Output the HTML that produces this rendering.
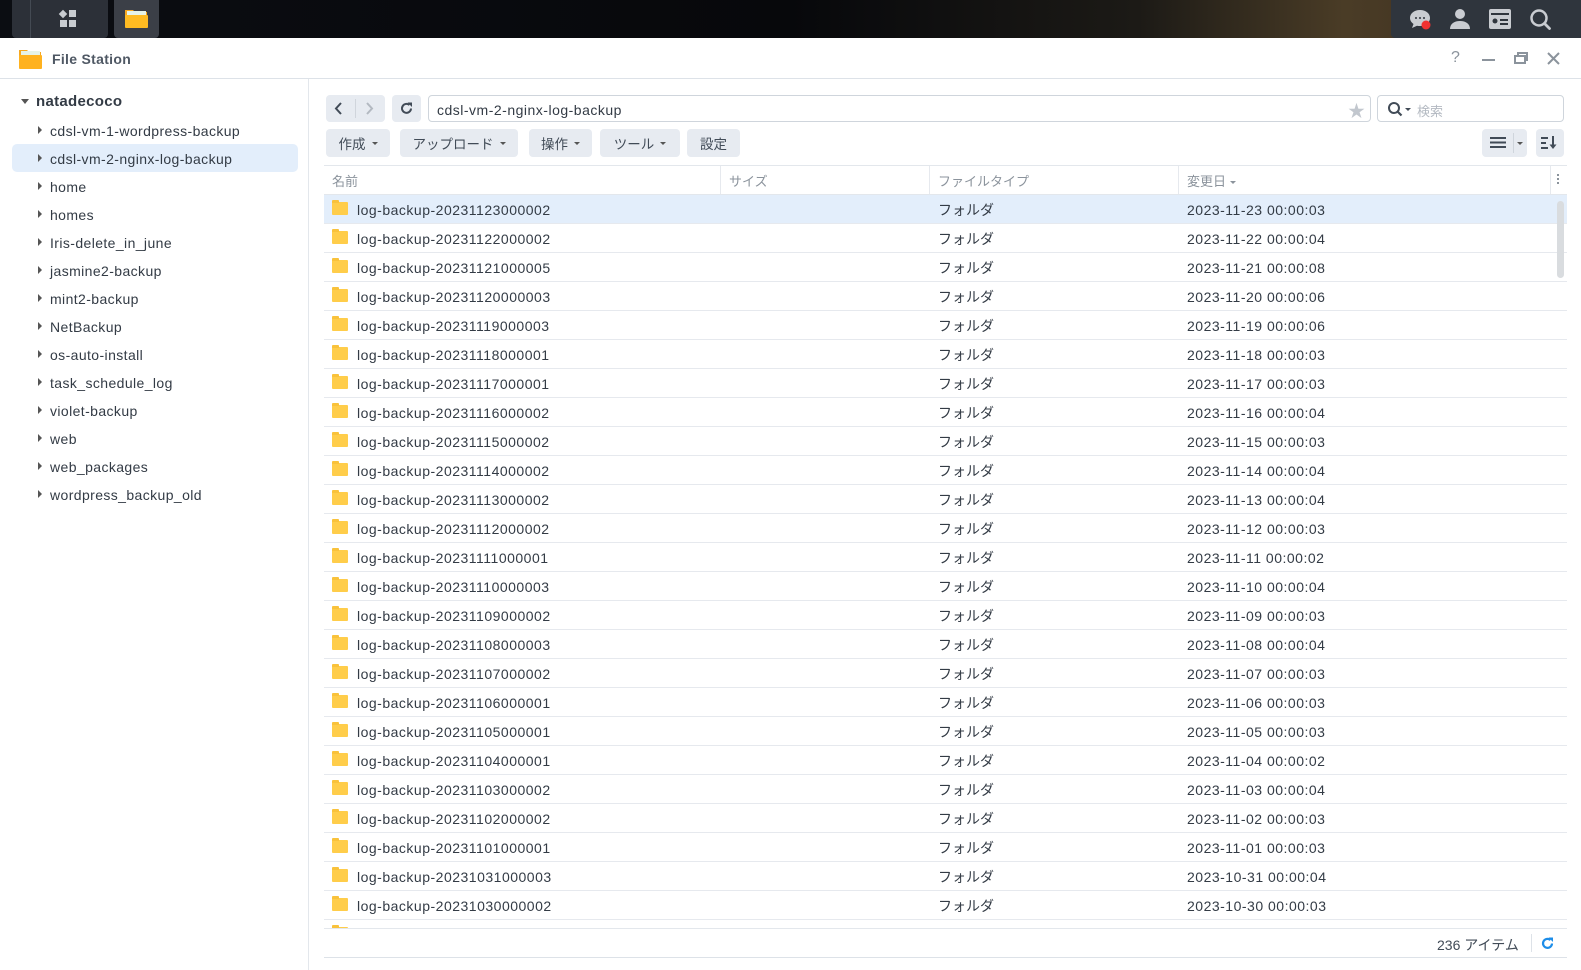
<!DOCTYPE html>
<html><head><meta charset="utf-8"><style>
*{margin:0;padding:0;box-sizing:border-box}
body{width:1581px;height:970px;overflow:hidden;background:#fff;font-family:"Liberation Sans","Noto Sans CJK JP",sans-serif;color:#333b45;font-size:14px;position:relative}
.a{position:absolute}
.top{left:0;top:0;width:1581px;height:38px;background:linear-gradient(90deg,#0b0d12 0%,#07080b 50%,#1c1a16 72%,#4a3c26 85%,#3a2a1e 100%)}
.btn{background:#e7ebf1;border-radius:4px;height:28px;display:flex;align-items:center;justify-content:center;font-size:13.5px;color:#414b57}
.caret{display:inline-block;width:0;height:0;border-left:3px solid transparent;border-right:3px solid transparent;border-top:3px solid #555;margin-left:6px;vertical-align:middle}
.row{position:absolute;left:324px;width:1243px;height:29px;border-bottom:1px solid #e6e9ee}
.row span{position:absolute;top:7px;white-space:nowrap;letter-spacing:0.5px}
.row span.j{top:5px;letter-spacing:0}
.fi{position:absolute;left:8px;top:7px;width:16px;height:13px;background:#ffcd4a;border-radius:1px}
.fi:before{content:"";position:absolute;left:0;top:-2px;width:7px;height:3px;background:#f9c23b;border-radius:1px 1px 0 0}
.side{position:absolute;left:50px;font-size:14px;color:#333b45;white-space:nowrap;letter-spacing:0.4px}
.tri{position:absolute;left:38px;width:0;height:0;border-top:4px solid transparent;border-bottom:4px solid transparent;border-left:4px solid #555}
.hd{position:absolute;top:171px;font-size:13px;color:#8b939c}
</style></head><body>
<div class="a top"></div>
<div class="a" style="left:12px;top:0;width:96px;height:38px;background:#2c3038;border-radius:0 0 4px 4px"></div>
<div class="a" style="left:30px;top:0;width:1px;height:38px;background:#444a53"></div>
<svg class="a" style="left:58px;top:9px" width="20" height="20"><rect x="11" y="1" width="7" height="7" fill="#c9ccd1"/><rect x="2" y="11" width="7" height="7" fill="#c9ccd1"/><rect x="11" y="11" width="7" height="7" fill="#c9ccd1"/><rect x="2" y="2" width="6" height="6" fill="#c9ccd1" transform="rotate(45 5 5)"/></svg>
<div class="a" style="left:114px;top:0;width:45px;height:38px;background:#3b3f47;border-radius:0 0 4px 4px"></div>
<svg class="a" style="left:124px;top:6px" width="25" height="24"><path d="M1 4h8l2 2h12v15H1z" fill="#f6a821"/><rect x="3" y="5" width="19" height="6" fill="#e6f3e8"/><rect x="1" y="9" width="23" height="13" rx="1" fill="#ffbb22"/></svg>
<div class="a" style="left:1391px;top:0;width:190px;height:38px;background:#2f353d;border-radius:0 0 0 4px"></div>
<svg class="a" style="left:1408px;top:8px" width="24" height="24"><path d="M12 2c6 0 10 3.5 10 8s-4 8-10 8c-1 0-2 0-3-.3L4 20l1.5-4C3.5 14.5 2 12.5 2 10c0-4.5 4-8 10-8z" fill="#c9ccd1"/><circle cx="8" cy="10" r="1" fill="#2f353d"/><circle cx="12" cy="10" r="1" fill="#2f353d"/><circle cx="16" cy="10" r="1" fill="#2f353d"/><circle cx="18" cy="17" r="4.5" fill="#f03232"/></svg>
<svg class="a" style="left:1449px;top:8px" width="22" height="22"><circle cx="11" cy="6" r="5" fill="#c9ccd1"/><path d="M1 21c0-5 4-8 10-8s10 3 10 8z" fill="#c9ccd1"/></svg>
<svg class="a" style="left:1488px;top:8px" width="24" height="22"><rect x="1" y="1" width="22" height="20" rx="2" fill="#c9ccd1"/><rect x="3" y="5" width="18" height="2" fill="#2f353d"/><circle cx="7" cy="13" r="2.5" fill="#2f353d"/><rect x="12" y="11" width="8" height="2" fill="#2f353d"/><rect x="12" y="15" width="8" height="2" fill="#2f353d"/></svg>
<svg class="a" style="left:1529px;top:8px" width="24" height="24"><circle cx="10" cy="10" r="7.5" stroke="#c9ccd1" stroke-width="2.5" fill="none"/><path d="M15.5 15.5l5 5" stroke="#c9ccd1" stroke-width="2.8" stroke-linecap="round"/></svg>

<svg class="a" style="left:18px;top:47px" width="25" height="24"><path d="M1 3h8l2 2h12v15H1z" fill="#f6a821"/><rect x="3" y="4" width="19" height="6" fill="#e6f3e8"/><rect x="1" y="8" width="23" height="14" rx="1" fill="#ffb21f"/></svg>
<div class="a" style="left:52px;top:51px;font-size:14px;font-weight:bold;color:#4f5864;letter-spacing:0.3px">File Station</div>
<div class="a" style="left:1451px;top:49px;font-size:16px;color:#8b939c">?</div>
<div class="a" style="left:1482px;top:59px;width:13px;height:2px;background:#8b939c"></div>
<svg class="a" style="left:1514px;top:51px" width="15" height="14"><rect x="1" y="5" width="10" height="7" stroke="#8b939c" stroke-width="2" fill="none"/><path d="M4 4V2h9v7h-2" stroke="#8b939c" stroke-width="2" fill="none"/></svg>
<svg class="a" style="left:1547px;top:52px" width="13" height="13"><path d="M1 1l11 11M12 1L1 12" stroke="#8b939c" stroke-width="2"/></svg>
<div class="a" style="left:0;top:78px;width:1581px;height:1px;background:#dde2e8"></div>

<div class="a" style="left:308px;top:79px;width:1px;height:891px;background:#e3e7ec"></div>
<div class="a" style="left:21px;top:99px;width:0;height:0;border-left:4px solid transparent;border-right:4px solid transparent;border-top:5px solid #555"></div>
<div class="a" style="left:36px;top:93px;font-size:15px;font-weight:bold;color:#333b45;letter-spacing:0.3px">natadecoco</div>
<div class="a" style="left:12px;top:144px;width:286px;height:28px;background:#e3eefb;border-radius:5px"></div>
<div class="tri" style="top:126px"></div><div class="side" style="top:123px">cdsl-vm-1-wordpress-backup</div>
<div class="tri" style="top:154px"></div><div class="side" style="top:151px">cdsl-vm-2-nginx-log-backup</div>
<div class="tri" style="top:182px"></div><div class="side" style="top:179px">home</div>
<div class="tri" style="top:210px"></div><div class="side" style="top:207px">homes</div>
<div class="tri" style="top:238px"></div><div class="side" style="top:235px">Iris-delete_in_june</div>
<div class="tri" style="top:266px"></div><div class="side" style="top:263px">jasmine2-backup</div>
<div class="tri" style="top:294px"></div><div class="side" style="top:291px">mint2-backup</div>
<div class="tri" style="top:322px"></div><div class="side" style="top:319px">NetBackup</div>
<div class="tri" style="top:350px"></div><div class="side" style="top:347px">os-auto-install</div>
<div class="tri" style="top:378px"></div><div class="side" style="top:375px">task_schedule_log</div>
<div class="tri" style="top:406px"></div><div class="side" style="top:403px">violet-backup</div>
<div class="tri" style="top:434px"></div><div class="side" style="top:431px">web</div>
<div class="tri" style="top:462px"></div><div class="side" style="top:459px">web_packages</div>
<div class="tri" style="top:490px"></div><div class="side" style="top:487px">wordpress_backup_old</div>

<div class="a btn" style="left:326px;top:95px;width:59px;height:27px"></div>
<div class="a" style="left:355px;top:99px;width:1px;height:19px;background:#d0d5dc"></div>
<svg class="a" style="left:334px;top:102px" width="10" height="13"><path d="M7 1L2 6.5 7 12" stroke="#414b57" stroke-width="2" fill="none"/></svg>
<svg class="a" style="left:365px;top:102px" width="10" height="13"><path d="M2 1l5 5.5L2 12" stroke="#b3b9c1" stroke-width="2" fill="none"/></svg>
<div class="a btn" style="left:392px;top:95px;width:29px;height:27px"></div>
<svg class="a" style="left:399px;top:101px" width="15" height="15"><path d="M12 7.5A4.5 4.5 0 1 1 10.5 4" stroke="#414b57" stroke-width="2" fill="none"/><path d="M8.5 1.5h4.5v4.5z" fill="#414b57"/></svg>
<div class="a" style="left:428px;top:95px;width:943px;height:27px;border:1px solid #cfd5dc;border-radius:4px"></div>
<div class="a" style="left:437px;top:102px;font-size:14px;color:#333b45;letter-spacing:0.5px">cdsl-vm-2-nginx-log-backup</div>
<div class="a" style="left:1348px;top:97px;font-size:17px;color:#c2c7ce">★</div>
<div class="a" style="left:1377px;top:95px;width:187px;height:27px;border:1px solid #cfd5dc;border-radius:4px"></div>
<svg class="a" style="left:1387px;top:101px" width="16" height="16"><circle cx="7" cy="7" r="5" stroke="#414b57" stroke-width="2" fill="none"/><path d="M10.5 10.5l4 4" stroke="#414b57" stroke-width="2.2"/></svg>
<div class="a" style="left:1405px;top:108px;width:0;height:0;border-left:3px solid transparent;border-right:3px solid transparent;border-top:3px solid #414b57"></div>
<div class="a" style="left:1417px;top:101px;font-size:13px;color:#b3b9c1">検索</div>

<div class="a btn" style="left:326px;top:129px;width:64px">作成<i class="caret"></i></div>
<div class="a btn" style="left:400px;top:129px;width:118px">アップロード<i class="caret"></i></div>
<div class="a btn" style="left:529px;top:129px;width:63px">操作<i class="caret"></i></div>
<div class="a btn" style="left:600px;top:129px;width:80px">ツール<i class="caret"></i></div>
<div class="a btn" style="left:687px;top:129px;width:53px">設定</div>
<div class="a btn" style="left:1482px;top:129px;width:45px"></div>
<div class="a" style="left:1513px;top:133px;width:1px;height:20px;background:#cfd5dc"></div>
<svg class="a" style="left:1490px;top:136px" width="16" height="13"><path d="M0 2h16M0 6.5h16M0 11h16" stroke="#414b57" stroke-width="2"/></svg>
<div class="a" style="left:1517px;top:142px;width:0;height:0;border-left:3px solid transparent;border-right:3px solid transparent;border-top:3px solid #555"></div>
<div class="a btn" style="left:1536px;top:129px;width:28px"></div>
<svg class="a" style="left:1541px;top:136px" width="18" height="14"><path d="M0 2h7M0 7h5M0 12h7" stroke="#414b57" stroke-width="2"/><path d="M12 0v11" stroke="#414b57" stroke-width="2"/><path d="M8.5 8.5L12 13l3.5-4.5z" fill="#414b57"/></svg>

<div class="a" style="left:324px;top:165px;width:1243px;height:1px;background:#e3e7ec"></div>
<div class="a" style="left:324px;top:194px;width:1243px;height:1px;background:#e3e7ec"></div>
<div class="a" style="left:720px;top:166px;width:1px;height:28px;background:#e6e9ee"></div>
<div class="a" style="left:929px;top:166px;width:1px;height:28px;background:#e6e9ee"></div>
<div class="a" style="left:1178px;top:166px;width:1px;height:28px;background:#e6e9ee"></div>
<div class="a" style="left:1550px;top:166px;width:1px;height:28px;background:#e6e9ee"></div>
<div class="hd" style="left:332px">名前</div>
<div class="hd" style="left:729px">サイズ</div>
<div class="hd" style="left:938px">ファイルタイプ</div>
<div class="hd" style="left:1187px">変更日 <i class="caret" style="margin-left:0;border-top-color:#8b939c"></i></div>
<div class="a" style="left:1557px;top:174px;width:2px;height:2px;background:#8b939c;box-shadow:0 4px #8b939c,0 8px #8b939c"></div>

<div class="a" style="left:0;top:195px;width:1581px;height:733px;overflow:hidden">
<div style="position:relative;top:-195px">
<div class="row" style="top:195px;background:#e3eefb"><i class="fi"></i><span style="left:33px">log-backup-20231123000002</span><span class="j" style="left:614px">フォルダ</span><span style="left:863px">2023-11-23 00:00:03</span></div>
<div class="row" style="top:224px"><i class="fi"></i><span style="left:33px">log-backup-20231122000002</span><span class="j" style="left:614px">フォルダ</span><span style="left:863px">2023-11-22 00:00:04</span></div>
<div class="row" style="top:253px"><i class="fi"></i><span style="left:33px">log-backup-20231121000005</span><span class="j" style="left:614px">フォルダ</span><span style="left:863px">2023-11-21 00:00:08</span></div>
<div class="row" style="top:282px"><i class="fi"></i><span style="left:33px">log-backup-20231120000003</span><span class="j" style="left:614px">フォルダ</span><span style="left:863px">2023-11-20 00:00:06</span></div>
<div class="row" style="top:311px"><i class="fi"></i><span style="left:33px">log-backup-20231119000003</span><span class="j" style="left:614px">フォルダ</span><span style="left:863px">2023-11-19 00:00:06</span></div>
<div class="row" style="top:340px"><i class="fi"></i><span style="left:33px">log-backup-20231118000001</span><span class="j" style="left:614px">フォルダ</span><span style="left:863px">2023-11-18 00:00:03</span></div>
<div class="row" style="top:369px"><i class="fi"></i><span style="left:33px">log-backup-20231117000001</span><span class="j" style="left:614px">フォルダ</span><span style="left:863px">2023-11-17 00:00:03</span></div>
<div class="row" style="top:398px"><i class="fi"></i><span style="left:33px">log-backup-20231116000002</span><span class="j" style="left:614px">フォルダ</span><span style="left:863px">2023-11-16 00:00:04</span></div>
<div class="row" style="top:427px"><i class="fi"></i><span style="left:33px">log-backup-20231115000002</span><span class="j" style="left:614px">フォルダ</span><span style="left:863px">2023-11-15 00:00:03</span></div>
<div class="row" style="top:456px"><i class="fi"></i><span style="left:33px">log-backup-20231114000002</span><span class="j" style="left:614px">フォルダ</span><span style="left:863px">2023-11-14 00:00:04</span></div>
<div class="row" style="top:485px"><i class="fi"></i><span style="left:33px">log-backup-20231113000002</span><span class="j" style="left:614px">フォルダ</span><span style="left:863px">2023-11-13 00:00:04</span></div>
<div class="row" style="top:514px"><i class="fi"></i><span style="left:33px">log-backup-20231112000002</span><span class="j" style="left:614px">フォルダ</span><span style="left:863px">2023-11-12 00:00:03</span></div>
<div class="row" style="top:543px"><i class="fi"></i><span style="left:33px">log-backup-20231111000001</span><span class="j" style="left:614px">フォルダ</span><span style="left:863px">2023-11-11 00:00:02</span></div>
<div class="row" style="top:572px"><i class="fi"></i><span style="left:33px">log-backup-20231110000003</span><span class="j" style="left:614px">フォルダ</span><span style="left:863px">2023-11-10 00:00:04</span></div>
<div class="row" style="top:601px"><i class="fi"></i><span style="left:33px">log-backup-20231109000002</span><span class="j" style="left:614px">フォルダ</span><span style="left:863px">2023-11-09 00:00:03</span></div>
<div class="row" style="top:630px"><i class="fi"></i><span style="left:33px">log-backup-20231108000003</span><span class="j" style="left:614px">フォルダ</span><span style="left:863px">2023-11-08 00:00:04</span></div>
<div class="row" style="top:659px"><i class="fi"></i><span style="left:33px">log-backup-20231107000002</span><span class="j" style="left:614px">フォルダ</span><span style="left:863px">2023-11-07 00:00:03</span></div>
<div class="row" style="top:688px"><i class="fi"></i><span style="left:33px">log-backup-20231106000001</span><span class="j" style="left:614px">フォルダ</span><span style="left:863px">2023-11-06 00:00:03</span></div>
<div class="row" style="top:717px"><i class="fi"></i><span style="left:33px">log-backup-20231105000001</span><span class="j" style="left:614px">フォルダ</span><span style="left:863px">2023-11-05 00:00:03</span></div>
<div class="row" style="top:746px"><i class="fi"></i><span style="left:33px">log-backup-20231104000001</span><span class="j" style="left:614px">フォルダ</span><span style="left:863px">2023-11-04 00:00:02</span></div>
<div class="row" style="top:775px"><i class="fi"></i><span style="left:33px">log-backup-20231103000002</span><span class="j" style="left:614px">フォルダ</span><span style="left:863px">2023-11-03 00:00:04</span></div>
<div class="row" style="top:804px"><i class="fi"></i><span style="left:33px">log-backup-20231102000002</span><span class="j" style="left:614px">フォルダ</span><span style="left:863px">2023-11-02 00:00:03</span></div>
<div class="row" style="top:833px"><i class="fi"></i><span style="left:33px">log-backup-20231101000001</span><span class="j" style="left:614px">フォルダ</span><span style="left:863px">2023-11-01 00:00:03</span></div>
<div class="row" style="top:862px"><i class="fi"></i><span style="left:33px">log-backup-20231031000003</span><span class="j" style="left:614px">フォルダ</span><span style="left:863px">2023-10-31 00:00:04</span></div>
<div class="row" style="top:891px"><i class="fi"></i><span style="left:33px">log-backup-20231030000002</span><span class="j" style="left:614px">フォルダ</span><span style="left:863px">2023-10-30 00:00:03</span></div>
<div class="row" style="top:920px"><i class="fi"></i></div>
</div></div>
<div class="a" style="left:1557px;top:201px;width:7px;height:77px;background:#d9dcdf;border-radius:4px"></div>

<div class="a" style="left:324px;top:928px;width:1243px;height:1px;background:#e3e7ec"></div>
<div class="a" style="left:1437px;top:935px;font-size:14px;color:#414b57">236 アイテム</div>
<div class="a" style="left:1531px;top:934px;width:1px;height:18px;background:#dde2e8"></div>
<svg class="a" style="left:1540px;top:936px" width="15" height="15"><path d="M12 7.5A4.5 4.5 0 1 1 10.5 4" stroke="#1d8de8" stroke-width="2.2" fill="none"/><path d="M8.5 1.5h4.5v4.5z" fill="#1d8de8"/></svg>
<div class="a" style="left:324px;top:957px;width:1243px;height:1px;background:#dde2e8"></div>
</body></html>
